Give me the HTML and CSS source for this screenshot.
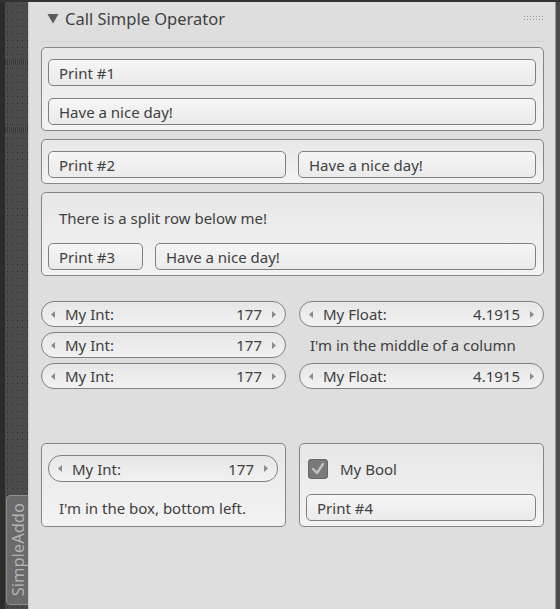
FILE: index.html
```html
<!DOCTYPE html>
<html>
<head>
<meta charset="utf-8">
<link rel="stylesheet" href="styles.css">
</head>
<body>
<div class="app">
  <div class="sidebar">
    <div class="band band-a"></div>
    <div class="band band-b"></div>
    <div class="tab"><span class="tab-text">SimpleAddo</span></div>
  </div>
  <div class="panel">
    <div class="header">
      <svg class="tri" width="12" height="11" viewBox="0 0 12 11"><polygon points="0.5,1 11.5,1 6,10.5" fill="#5a5a5a"/></svg>
      <span class="title">Call Simple Operator</span>
      <span class="grip"></span>
    </div>
    <div class="sep"></div>
    <div class="body">
      <div class="box">
        <div class="btn">Print #1</div>
        <div class="btn">Have a nice day!</div>
      </div>
      <div class="box">
        <div class="split half">
          <div class="btn">Print #2</div>
          <div class="btn">Have a nice day!</div>
        </div>
      </div>
      <div class="box">
        <div class="label">There is a split row below me!</div>
        <div class="split narrow">
          <div class="btn">Print #3</div>
          <div class="btn">Have a nice day!</div>
        </div>
      </div>
      <div class="cols fields">
        <div class="col">
          <div class="num"><svg class="arr" width="4" height="7" viewBox="0 0 4 7"><polygon points="4,0 4,7 0,3.5" fill="#8a8a8a"/></svg><span class="nl">My Int:</span><span class="nv">177</span><svg class="arr ar" width="4" height="7" viewBox="0 0 4 7"><polygon points="0,0 0,7 4,3.5" fill="#8a8a8a"/></svg></div>
          <div class="num"><svg class="arr" width="4" height="7" viewBox="0 0 4 7"><polygon points="4,0 4,7 0,3.5" fill="#8a8a8a"/></svg><span class="nl">My Int:</span><span class="nv">177</span><svg class="arr ar" width="4" height="7" viewBox="0 0 4 7"><polygon points="0,0 0,7 4,3.5" fill="#8a8a8a"/></svg></div>
          <div class="num"><svg class="arr" width="4" height="7" viewBox="0 0 4 7"><polygon points="4,0 4,7 0,3.5" fill="#8a8a8a"/></svg><span class="nl">My Int:</span><span class="nv">177</span><svg class="arr ar" width="4" height="7" viewBox="0 0 4 7"><polygon points="0,0 0,7 4,3.5" fill="#8a8a8a"/></svg></div>
        </div>
        <div class="col">
          <div class="num"><svg class="arr" width="4" height="7" viewBox="0 0 4 7"><polygon points="4,0 4,7 0,3.5" fill="#8a8a8a"/></svg><span class="nl">My Float:</span><span class="nv">4.1915</span><svg class="arr ar" width="4" height="7" viewBox="0 0 4 7"><polygon points="0,0 0,7 4,3.5" fill="#8a8a8a"/></svg></div>
          <div class="label row26">I'm in the middle of a column</div>
          <div class="num"><svg class="arr" width="4" height="7" viewBox="0 0 4 7"><polygon points="4,0 4,7 0,3.5" fill="#8a8a8a"/></svg><span class="nl">My Float:</span><span class="nv">4.1915</span><svg class="arr ar" width="4" height="7" viewBox="0 0 4 7"><polygon points="0,0 0,7 4,3.5" fill="#8a8a8a"/></svg></div>
        </div>
      </div>
      <div class="cols bottom">
        <div class="box">
          <div class="num tall"><svg class="arr" width="4" height="7" viewBox="0 0 4 7"><polygon points="4,0 4,7 0,3.5" fill="#8a8a8a"/></svg><span class="nl">My Int:</span><span class="nv">177</span><svg class="arr ar" width="4" height="7" viewBox="0 0 4 7"><polygon points="0,0 0,7 4,3.5" fill="#8a8a8a"/></svg></div>
          <div class="label">I'm in the box, bottom left.</div>
        </div>
        <div class="box">
          <div class="check-row">
            <span class="check"><svg width="20" height="20" viewBox="0 0 20 20"><polyline points="5,10 9,14 15,5" fill="none" stroke="#c4c4c4" stroke-width="2.4" stroke-linecap="round" stroke-linejoin="round"/></svg></span>
            <span class="check-label">My Bool</span>
          </div>
          <div class="btn">Print #4</div>
        </div>
      </div>
    </div>
  </div>
  <div class="rstrip"></div>
</div>
</body>
</html>
```

FILE: styles.css
```css
html, body {
  margin: 0;
  padding: 0;
  background: #dedede;
}
body {
  font-family: "Noto Sans", "Open Sans", sans-serif;
  font-size: 15px;
  color: #404040;
}
.app {
  display: flex;
  width: 560px;
  height: 607px;
  border-top: 2px solid #333;
  overflow: hidden;
}
.sidebar {
  width: 23px;
  flex: none;
  display: flex;
  flex-direction: column;
  background-color: #4b4b4b;
  background-image: radial-gradient(circle, #2a2a2a 0.6px, transparent 0.8px);
  background-size: 5px 7px;
  border-left: 5px solid #2c2c2c;
  border-right: 1px solid #c8c8c8;
}
.band {
  height: 6px;
  background: repeating-linear-gradient(90deg, #343434 0 1px, #555 1px 2px);
}
.band-a { margin-top: 57px; }
.band-b { margin-top: 62px; }
.tab {
  margin-top: auto;
  margin-bottom: 4px;
  margin-left: 1px;
  height: 108px;
  background: #6a6a6a;
  border: 1px solid #8e8e8e;
  border-right: none;
  border-radius: 5px 0 0 5px;
  display: flex;
  align-items: center;
  justify-content: center;
}
.tab-text {
  writing-mode: vertical-rl;
  transform: rotate(180deg);
  color: #b4b4b4;
  font-size: 16.5px;
  line-height: 20px;
}
.panel {
  width: 503px;
  flex: none;
  padding: 0 11px 0 12px;
  display: flex;
  flex-direction: column;
}
.header {
  height: 32px;
  display: flex;
  align-items: center;
}
.tri {
  margin-left: 6px;
  margin-top: 1px;
}
.title {
  margin-left: 6px;
  font-size: 16.5px;
  color: #404040;
}
.grip {
  margin-left: auto;
  margin-right: 1px;
  width: 20px;
  height: 7px;
  background-image: radial-gradient(circle, #9a9a9a 0.8px, transparent 1px);
  background-size: 3px 3px;
}
.sep {
  margin-top: 7px;
  border-top: 1px dotted #cacaca;
  margin-bottom: 5px;
}
.body {
  display: flex;
  flex-direction: column;
  gap: 8px;
}
.box {
  border: 1px solid #858585;
  border-radius: 5px;
  padding: 11px 7px 5px 6px;
  display: flex;
  flex-direction: column;
  gap: 12px;
  background: linear-gradient(#e7e7e7, #f3f3f3);
}
.btn {
  height: 25px;
  border: 1px solid #808080;
  border-radius: 5px;
  background: linear-gradient(#f6f6f6, #eaeaea);
  display: flex;
  align-items: center;
  padding-left: 10px;
  white-space: nowrap;
}
.label {
  height: 27px;
  display: flex;
  align-items: center;
  padding-left: 11px;
  white-space: nowrap;
}
.label.row26 { height: 26px; }
.split {
  display: grid;
  gap: 12px;
}
.split.half { grid-template-columns: 1fr 1fr; }
.split.narrow { grid-template-columns: 95px 1fr; }
.cols {
  display: grid;
  grid-template-columns: 1fr 1fr;
  gap: 13px;
}
.fields { margin-top: 17px; }
.bottom {
  margin-top: 46px;
  align-items: start;
}
.col {
  display: flex;
  flex-direction: column;
  gap: 5px;
}
.num {
  height: 24px;
  border: 1px solid #808080;
  border-radius: 13px;
  background: linear-gradient(#e6e6e6, #f2f2f2);
  display: flex;
  align-items: center;
  padding: 0 9px;
  white-space: nowrap;
}
.num.tall { height: 25px; }
.nl { margin-left: 10px; }
.nv { margin-left: auto; }
.ar { margin-left: 10px; }
.check-row {
  height: 27px;
  display: flex;
  align-items: center;
}
.check {
  margin-left: 2px;
  width: 20px;
  height: 20px;
  border-radius: 4px;
  background: #7a7a7a;
  box-shadow: inset 0 0 0 1px #666;
  display: flex;
}
.check-label { margin-left: 12px; }
.rstrip {
  flex: none;
  width: 4px;
  background: #4c4c4c;
  border-left: 1px solid #9c9c9c;
}
```
